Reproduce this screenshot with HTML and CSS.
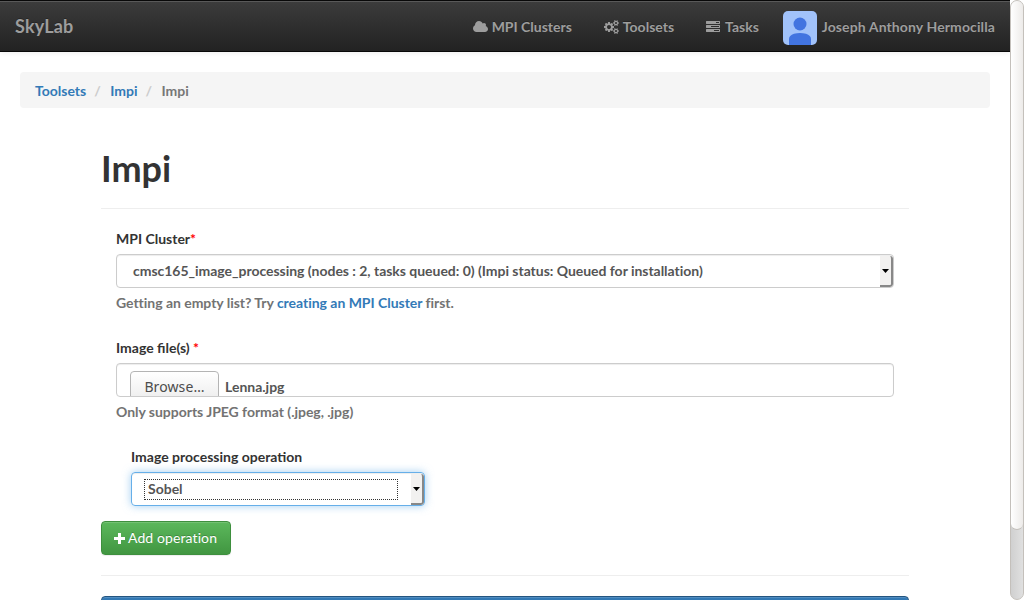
FILE: index.html
```html
<!DOCTYPE html>
<html lang="en">
<head>
<meta charset="utf-8">
<title>SkyLab - Impi</title>
<link rel="stylesheet" href="styles.css">
</head>
<body>
<div class="page">
  <nav class="navbar">
    <a class="brand">SkyLab</a>
    <div class="nav-items">
      <a class="nav-link"><svg class="icon cloud" viewBox="64 0 1920 1792"><path d="M1984 1152q0 159-112.5 271.5t-271.5 112.5h-1088q-185 0-316.5-131.5t-131.5-316.5q0-132 71-241.5t187-163.5q-2-28-2-43 0-212 150-362t362-150q158 0 286.5 88t187.5 230q70-62 166-62 106 0 181 75t75 181q0 75-41 138 129 30 213 134.5t84 239.5z"/></svg><span>MPI Clusters</span></a>
      <a class="nav-link"><svg class="icon cogs" viewBox="0 0 1920 1792"><path d="M896 896q0-106-75-181t-181-75-181 75-75 181 75 181 181 75 181-75 75-181zm768 512q0-52-38-90t-90-38-90 38-38 90q0 53 37.500 90.500t90.500 37.500 90.500-37.500 37.500-90.500zm0-1024q0-52-38-90t-90-38-90 38-38 90q0 53 37.500 90.500t90.500 37.500 90.500-37.500 37.500-90.500zm-384 421v185q0 10-7 19.500t-16 10.500l-155 24q-11 35-32 76 34 48 90 115 7 11 7 20 0 12-7 19-23 30-82.500 89.500t-78.500 59.500q-11 0-21-7l-115-90q-37 19-77 31-11 108-23 155-7 24-30 24h-186q-11 0-20-7.500t-10-17.500l-23-153q-34-10-75-31l-118 89q-7 7-20 7-11 0-21-8-144-133-144-160 0-9 7-19 10-14 41-53t47-61q-23-44-35-82l-152-24q-10-1-17-9.500t-7-19.500v-185q0-10 7-19.500t16-10.500l155-24q11-35 32-76-34-48-90-115-7-11-7-20 0-12 7-20 22-30 82-89t79-59q11 0 21 7l115 90q34-18 77-32 11-108 23-154 7-24 30-24h186q11 0 20 7.500t10 17.500l23 153q34 10 75 31l118-89q8-7 20-7 11 0 21 8 144 133 144 160 0 8-7 19-12 16-42 54t-45 60q23 48 34 82l152 23q10 2 17 10.500t7 19.500zm640 533v140q0 16-149 31-12 27-30 52 51 113 51 138 0 4-4 7-122 71-124 71-8 0-46-47t-52-68q-20 2-30 2t-30-2q-14 21-52 68t-46 47q-2 0-124-71-4-3-4-7 0-25 51-138-18-25-30-52-149-15-149-31v-140q0-16 149-31 13-29 30-52-51-113-51-138 0-4 4-7 4-2 35-20t59-34 30-16q8 0 46 46.500t52 67.500q20-2 30-2t30 2q51-71 92-112l6-2q4 0 124 70 4 3 4 7 0 25-51 138 17 23 30 52 149 15 149 31zm0-1024v140q0 16-149 31-12 27-30 52 51 113 51 138 0 4-4 7-122 71-124 71-8 0-46-47t-52-68q-20 2-30 2t-30-2q-14 21-52 68t-46 47q-2 0-124-71-4-3-4-7 0-25 51-138-18-25-30-52-149-15-149-31v-140q0-16 149-31 13-29 30-52-51-113-51-138 0-4 4-7 4-2 35-20t59-34 30-16q8 0 46 46.500t52 67.500q20-2 30-2t30 2q51-71 92-112l6-2q4 0 124 70 4 3 4 7 0 25-51 138 17 23 30 52 149 15 149 31z"/></svg><span>Toolsets</span></a>
      <a class="nav-link"><svg class="icon tasks" viewBox="0 0 1792 1792"><path d="M1024 1408h640v-128h-640v128zm-384-512h1024v-128h-1024v128zm640-512h384v-128h-384v128zm512 832v256q0 26-19 45t-45 19h-1664q-26 0-45-19t-19-45v-256q0-26 19-45t45-19h1664q26 0 45 19t19 45zm0-512v256q0 26-19 45t-45 19h-1664q-26 0-45-19t-19-45v-256q0-26 19-45t45-19h1664q26 0 45 19t19 45zm0-512v256q0 26-19 45t-45 19h-1664q-26 0-45-19t-19-45v-256q0-26 19-45t45-19h1664q26 0 45 19t19 45z"/></svg><span>Tasks</span></a>
      <a class="nav-link user"><svg class="avatar" viewBox="0 0 34 34"><rect width="34" height="34" fill="#a1c2fa"/><circle cx="17" cy="13" r="6.500" fill="#4274e0"/><path d="M6 34v-6q0-3.500 5-5.200 6-1.800 12 0 5 1.700 5 5.200v6z" fill="#4274e0"/></svg><span>Joseph Anthony Hermocilla</span></a>
    </div>
  </nav>

  <div class="breadcrumb"><a>Toolsets</a><span class="sep">/</span><a>Impi</a><span class="sep">/</span><span>Impi</span></div>

  <main class="container">
    <h1>Impi</h1>
    <form>
      <div class="field">
        <label>MPI Cluster<span class="required">*</span></label>
        <div class="control select cluster"><span class="value">cmsc165_image_processing (nodes : 2, tasks queued: 0) (Impi status: Queued for installation)</span><span class="drop"><svg viewBox="0 0 7 4"><path d="M0 0h7L3.500 4z"/></svg></span></div>
        <p class="help">Getting an empty list? Try <a>creating an MPI Cluster</a> first.</p>
      </div>
      <div class="field">
        <label>Image file(s) <span class="required">*</span></label>
        <div class="control file"><span class="browse">Browse…</span><span class="filename">Lenna.jpg</span></div>
        <p class="help">Only supports JPEG format (.jpeg, .jpg)</p>
      </div>
      <div class="field operation">
        <label>Image processing operation</label>
        <div class="control select focused"><span class="value">Sobel</span><span class="drop"><svg viewBox="0 0 7 4"><path d="M0 0h7L3.500 4z"/></svg></span></div>
      </div>
      <div class="add"><svg viewBox="0 0 11 11"><path d="M4 0h3v4h4v3H7v4H4V7H0V4h4z"/></svg><span>Add operation</span></div>
      <div class="submit-row"><div class="submit"></div></div>
    </form>
  </main>
</div>
<div class="scrollbar"><div class="thumb"></div></div>
</body>
</html>
```
FILE: styles.css
```css
* { box-sizing: border-box; }
body {
  margin: 0;
  width: 1024px;
  height: 600px;
  overflow: hidden;
  display: flex;
  background: #fff;
  color: #333;
  font: bold 14px/20px Lato, sans-serif;
}
a { color: #337ab7; }
.page { width: 1010px; height: 600px; overflow: hidden; }
.navbar {
  height: 52px;
  display: flex;
  justify-content: space-between;
  align-items: center;
  padding: 2px 15px 0;
  border-top: 1px solid #080808;
  border-bottom: 1px solid #080808;
  background: linear-gradient(#3c3c3c, #222);
  box-shadow: inset 0 1px 0 rgba(255,255,255,.15), 0 1px 5px rgba(0,0,0,.075);
  text-shadow: 0 -1px 0 rgba(0,0,0,.25);
}
.brand { padding-bottom: 2px; color: #9d9d9d; font-size: 18px; letter-spacing: .15px; }
.nav-items { display: flex; gap: 32px; }
.nav-link { display: flex; align-items: center; gap: 4px; color: #9d9d9d; white-space: nowrap; }
.icon { width: 15px; height: 14px; fill: #9d9d9d; }
.tasks { width: 14px; margin-right: 1px; }
.user { gap: 5px; margin-left: -8px; letter-spacing: .11px; }
.avatar { width: 34px; height: 34px; margin-top: 2px; border-radius: 5px; }
.breadcrumb {
  margin: 20px 20px 0;
  height: 36px;
  padding: 9px 15px;
  display: flex;
  background: #f5f5f5;
  border-radius: 4px;
  color: #777;
}
.sep { width: 24px; padding-left: 8px; color: #ccc; }
.container { width: 808px; margin: 38px auto 0; }
h1 {
  margin: 0 0 20px;
  height: 63px;
  border-bottom: 1px solid #eee;
  font-size: 36px;
  line-height: 44px;
}
.field { height: 109px; padding: 0 15px; }
label { display: block; height: 25px; white-space: pre; }
.required { color: #f00; }
.control {
  height: 34px;
  display: flex;
  border: 1px solid #ccc;
  border-radius: 4px;
  box-shadow: inset 0 1px 1px rgba(0,0,0,.075);
  color: #555;
  overflow: hidden;
}
.select { justify-content: space-between; }
.cluster .value { padding: 6px 0 0 16px; letter-spacing: -.03px; }
.drop {
  width: 13px;
  display: flex;
  align-items: center;
  justify-content: center;
  margin-top: 1px;
  background: #f2f1f0;
  border: solid #888;
  border-width: 0 2px 2px 0;
  border-radius: 0 3px 3px 0;
}
.drop svg { width: 7px; height: 4px; flex: none; fill: #000; }
.help { margin: 5px 0 0; color: #737373; letter-spacing: -.03px; }
.file { align-items: flex-start; padding: 7px 0 0 13px; }
.browse {
  width: 89px;
  height: 32px;
  flex: none;
  padding-top: 5px;
  border: 1px solid #b4b4b4;
  border-radius: 4px;
  background: linear-gradient(#fff, #ececec);
  color: #4c4c4c;
  font: 14px/20px "Noto Sans", sans-serif;
  letter-spacing: .1px;
  text-align: center;
}
.filename { padding: 6px 0 0 6px; }
.operation { width: 324px; height: 74px; padding: 0 0 0 30px; }
.focused {
  border-color: #66afe9;
  box-shadow: inset 0 1px 1px rgba(0,0,0,.075), 0 0 8px rgba(102,175,233,.6);
}
.focused .value {
  width: 254px;
  height: 21px;
  margin: 6px 0 0 12px;
  padding-left: 3px;
  border: 1px dotted #333;
  line-height: 18px;
}
.add {
  width: 130px;
  height: 34px;
  display: flex;
  align-items: center;
  gap: 3px;
  padding-left: 12px;
  border: 1px solid #3e8f3e;
  border-radius: 4px;
  background: linear-gradient(#5cb85c, #419641);
  box-shadow: inset 0 1px 0 rgba(255,255,255,.15), 0 1px 1px rgba(0,0,0,.075);
  color: #fff;
  font-weight: 400;
  letter-spacing: .1px;
  text-shadow: 0 -1px 0 rgba(0,0,0,.2);
  white-space: nowrap;
}
.add svg { width: 11px; height: 11px; fill: #fff; }
.submit-row { margin-top: 20px; padding-top: 20px; border-top: 1px solid #eee; }
.submit {
  height: 34px;
  border: 1px solid #245580;
  border-radius: 4px;
  background: linear-gradient(#337ab7, #265a88);
  box-shadow: inset 0 1px 0 rgba(255,255,255,.15);
}
.scrollbar {
  width: 14px;
  height: 600px;
  border: 1px solid #c4c0bb;
  border-radius: 7px;
  background: linear-gradient(90deg, #d0d0d0, #e0e0e0);
}
.thumb {
  height: 529px;
  border-radius: 6px;
  border-bottom: 1px solid #c4c0bb;
  background: linear-gradient(90deg, #fff, #edebe9);
}
```
